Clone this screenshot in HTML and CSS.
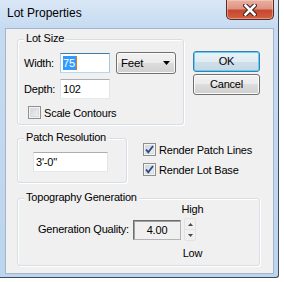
FILE: index.html
```
<!DOCTYPE html>
<html>
<head>
<meta charset="utf-8">
<link rel="stylesheet" href="styles.css">
</head>
<body>
<div class="window">
  <div class="titlebar">
    <span class="title">Lot Properties</span>
    <div class="close">
      <svg width="14" height="12" viewBox="0 0 14 12">
        <path d="M2.5 1.5 L11.5 10.5 M11.5 1.5 L2.5 10.5" stroke="#3a1f1a" stroke-width="4.6" stroke-linecap="square"/>
        <path d="M2.5 1.5 L11.5 10.5 M11.5 1.5 L2.5 10.5" stroke="#ffffff" stroke-width="2.6" stroke-linecap="square"/>
      </svg>
    </div>
  </div>
  <div class="client">
    <div class="row row-top">
      <div class="group lotsize">
        <span class="group-title">Lot Size</span>
        <div class="field-row row-width">
          <span class="lbl">Width:</span>
          <div class="edit focus"><span class="sel">75</span></div>
          <div class="combo">
            <span>Feet</span>
            <svg class="arrow" width="7" height="4" viewBox="0 0 7 4"><path d="M0 0 H7 L3.5 4 Z" fill="#000"/></svg>
          </div>
        </div>
        <div class="field-row row-depth">
          <span class="lbl">Depth:</span>
          <div class="edit">102</div>
        </div>
        <div class="check-row indent">
          <span class="cb"></span>
          <span>Scale Contours</span>
        </div>
      </div>
      <div class="buttons">
        <div class="btn default">OK</div>
        <div class="btn">Cancel</div>
      </div>
    </div>
    <div class="row row-mid">
      <div class="group patch">
        <span class="group-title">Patch Resolution</span>
        <div class="edit wide">3'-0"</div>
      </div>
      <div class="checks">
        <div class="check-row">
          <span class="cb checked"><svg width="11" height="11" viewBox="0 0 11 11"><path d="M2 5.5 L4.3 8.2 L9 2" stroke="#2c4a8a" stroke-width="1.8" fill="none"/></svg></span>
          <span>Render Patch Lines</span>
        </div>
        <div class="check-row">
          <span class="cb checked"><svg width="11" height="11" viewBox="0 0 11 11"><path d="M2 5.5 L4.3 8.2 L9 2" stroke="#2c4a8a" stroke-width="1.8" fill="none"/></svg></span>
          <span>Render Lot Base</span>
        </div>
      </div>
    </div>
    <div class="row row-bottom">
      <div class="group topo">
        <span class="group-title">Topography Generation</span>
        <div class="quality-row">
          <span class="qlabel">Generation Quality:</span>
          <div class="qbox">4.00</div>
          <div class="spin-col">
            <span>High</span>
            <div class="spinner">
              <div class="spin-btn"><svg width="5" height="3" viewBox="0 0 5 3"><path d="M0 3 H5 L2.5 0 Z" fill="#4a4a4a"/></svg></div>
              <div class="spin-btn"><svg width="5" height="3" viewBox="0 0 5 3"><path d="M0 0 H5 L2.5 3 Z" fill="#4a4a4a"/></svg></div>
            </div>
            <span class="low">Low</span>
          </div>
        </div>
      </div>
    </div>
  </div>
</div>
</body>
</html>
```

FILE: styles.css
```
* { box-sizing: border-box; }

body {
  margin: 0;
  background: #ffffff;
  font-family: "Liberation Sans", Arial, sans-serif;
  font-size: 11px;
  letter-spacing: -0.2px;
  color: #000;
}

.window {
  width: 279px;
  height: 278px;
  border-right: 1px solid #3f4b59;
  border-bottom: 1px solid #3f4b59;
  border-bottom-right-radius: 3px;
  background: linear-gradient(180deg, #d9e7f6 0px, #c6dbf1 28px, #bdd4ee 100%);
  padding: 0 4px 3px 5px;
  display: flex;
  flex-direction: column;
}

.titlebar {
  height: 28px;
  display: flex;
  justify-content: space-between;
  align-items: flex-start;
}

.title {
  font-size: 12px;
  letter-spacing: 0;
  line-height: 14px;
  margin-top: 6px;
  padding-left: 2px;
}

.close {
  width: 48px;
  height: 20px;
  border: 1px solid #5b2a22;
  border-top: none;
  border-radius: 0 0 5px 5px;
  background: linear-gradient(180deg, #ebb0a2 0%, #df9482 45%, #c8472f 55%, #d0603f 100%);
  box-shadow: inset 0 0 0 1px rgba(255, 220, 210, 0.45);
  display: flex;
  align-items: center;
  justify-content: center;
}

.client {
  flex: 1;
  background: #f0f0f0;
  border: 1px solid #a3b5ca;
  padding: 10px 0 0 11px;
}

.row { display: flex; }
.row-mid { margin-top: 13px; }
.row-bottom { margin-top: 15px; }

.group {
  position: relative;
  border: 1px solid #d5dfe5;
  border-radius: 3px;
  box-shadow: 1px 1px 0 #ffffff, inset 1px 1px 0 #ffffff;
}

.group-title {
  position: absolute;
  top: -8px;
  left: 6px;
  padding: 0 2px;
  line-height: 13px;
  background: #f0f0f0;
}

.lotsize {
  width: 167px;
  height: 86px;
  padding: 12px 0 0 6px;
}

.field-row {
  display: flex;
  align-items: center;
}

.row-width { height: 22px; }
.row-depth { height: 20px; margin-top: 5px; }

.lbl { width: 36px; }

.edit {
  width: 50px;
  height: 20px;
  background: #fff;
  border: 1px solid;
  border-color: #abadb3 #e2e3ea #e3e9ef #e2e3ea;
  padding-left: 2px;
  line-height: 18px;
}

.edit.focus {
  border-color: #3d7bad #a4c9e3 #b7d9ed #a4c9e3;
}

.sel {
  display: inline-block;
  background: #3399ff;
  color: #fff;
  line-height: 14px;
  padding-right: 1px;
  border-right: 1px solid #e07a20;
}

.combo {
  margin-left: 6px;
  width: 60px;
  height: 22px;
  border: 1px solid #707070;
  border-radius: 3px;
  background: linear-gradient(180deg, #f2f2f2 0%, #ebebeb 50%, #dddddd 50%, #cfcfcf 100%);
  box-shadow: inset 0 0 0 1px #fafafa;
  display: flex;
  align-items: center;
  justify-content: space-between;
  padding: 0 5px 0 4px;
}

.combo span { font-size: 11.5px; }

.check-row {
  display: flex;
  align-items: center;
  gap: 3px;
  height: 13px;
}

.indent {
  margin-top: 7px;
  padding-left: 4px;
}

.cb {
  width: 13px;
  height: 13px;
  border: 1px solid #8e8f8f;
  background: linear-gradient(135deg, #cbcfd5 0%, #f6f6f6 100%);
  box-shadow: inset 0 0 0 1px #f4f4f4, inset 0 0 0 2px #d8dbe0;
  display: flex;
  align-items: center;
  justify-content: center;
}

.buttons {
  margin-left: 9px;
  margin-top: 12px;
  display: flex;
  flex-direction: column;
  gap: 2px;
}

.btn {
  width: 67px;
  height: 21px;
  border: 1px solid #707070;
  border-radius: 3px;
  background: linear-gradient(180deg, #f2f2f2 0%, #ebebeb 50%, #dddddd 50%, #cfcfcf 100%);
  box-shadow: inset 0 0 0 1px #fcfcfc;
  text-align: center;
  line-height: 19px;
}

.btn.default {
  border-color: #3c7fb1;
  background: linear-gradient(180deg, #eaf2f7 0%, #e0ebf2 50%, #d0e0ea 50%, #c4d8e5 100%);
  box-shadow: inset 0 0 0 1px #5fd0f5;
}

.patch {
  width: 110px;
  height: 45px;
  padding: 13px 0 0 15px;
}

.edit.wide { width: 75px; }

.checks {
  margin-left: 16px;
  padding-top: 5px;
  display: flex;
  flex-direction: column;
  gap: 7px;
}

.topo {
  width: 243px;
  height: 68px;
  padding: 4px 0 0 20px;
}

.quality-row {
  display: flex;
  align-items: flex-start;
}

.qlabel {
  width: 95px;
  line-height: 13px;
  margin-top: 20px;
}

.qbox {
  width: 48px;
  height: 20px;
  margin-top: 17px;
  border: 1px solid;
  border-color: #6d6d6d #b4b4b4 #b4b4b4 #6d6d6d;
  box-shadow: inset 1px 1px 0 #a0a0a0;
  text-align: center;
  line-height: 18px;
}

.spin-col {
  margin-left: 3px;
  width: 17px;
  display: flex;
  flex-direction: column;
  align-items: center;
  line-height: 13px;
}

.spinner {
  align-self: flex-start;
  margin-top: 2px;
  width: 12px;
  height: 23px;
  display: flex;
  flex-direction: column;
  border: 1px solid #e2e2e2;
  border-radius: 2px;
  background: #f0f0f0;
}

.spin-btn {
  flex: 1;
  display: flex;
  align-items: center;
  justify-content: center;
}

.spin-btn + .spin-btn { border-top: 1px solid #e4e4e4; }

.low { margin-top: 6px; }
```
